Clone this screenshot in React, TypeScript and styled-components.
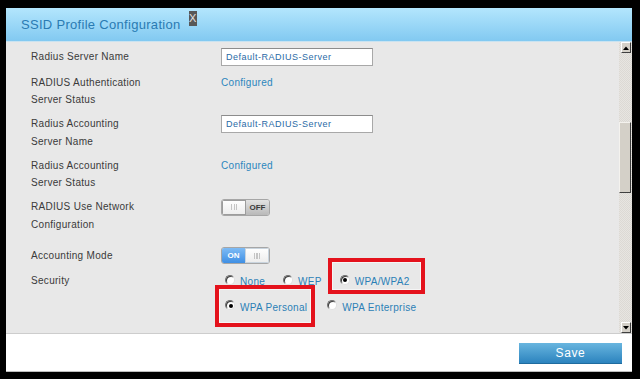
import styled, { createGlobalStyle } from "styled-components";

const GlobalStyle = createGlobalStyle`
  html, body {
    margin: 0;
    padding: 0;
    background: #000000;
    font-family: "Liberation Sans", Arial, sans-serif;
  }
`;

const Page = styled.div`
  width: 640px;
  height: 379px;
  box-sizing: border-box;
  padding: 8px 8px 7px 6px;
`;

const Dialog = styled.div`
  width: 626px;
  height: 364px;
  display: flex;
  flex-direction: column;
  background: #ffffff;
  overflow: hidden;
`;

const TitleBar = styled.div`
  height: 34px;
  box-sizing: border-box;
  padding-left: 15px;
  display: flex;
  align-items: center;
  background: linear-gradient(#b3e6fd, #82c9f1);
  border-bottom: 1px solid #c9e3f1;
`;

const Title = styled.div`
  font-size: 13px;
  letter-spacing: 0.3px;
  color: #2a7bb3;
`;

const CloseBox = styled.div`
  align-self: flex-start;
  margin: 3px 0 0 8px;
  width: 8px;
  height: 15px;
  background: #585858;
  color: #e2e2e2;
  font-size: 11px;
  line-height: 15px;
  text-align: center;
`;

const Body = styled.div`
  flex: 1;
  display: flex;
  background: #e8e8e8;
  overflow: hidden;
`;

const Content = styled.div`
  flex: 1;
  padding: 6px 0 0 25px;
  display: flex;
  flex-direction: column;
  gap: 6.5px;
`;

const Row = styled.div<{ $extra?: number }>`
  display: grid;
  grid-template-columns: 190px 1fr;
  align-items: start;
  min-height: 19px;
  margin-top: ${(p) => p.$extra ?? 0}px;
`;

const Label = styled.div`
  font-size: 10px;
  line-height: 17.5px;
  letter-spacing: 0.3px;
  color: #3a3a3a;
`;

const Value = styled.div`
  min-height: 18px;
  display: flex;
  align-items: center;
`;

const TextField = styled.input`
  width: 152px;
  height: 18px;
  box-sizing: border-box;
  margin: 0;
  padding: 0 0 0 4px;
  border: 1px solid #a8a8a8;
  border-top-color: #8c8c8c;
  background: #ffffff;
  font-family: "Liberation Sans", Arial, sans-serif;
  font-size: 9px;
  letter-spacing: 0.5px;
  color: #2a6aa6;
  outline: none;
`;

const Status = styled.span`
  font-size: 10px;
  letter-spacing: 0.3px;
  color: #2b86bd;
`;

const Switch = styled.div`
  width: 49px;
  height: 17px;
  box-sizing: border-box;
  display: flex;
  border: 1px solid #a6a6a6;
  border-radius: 3px;
  overflow: hidden;
`;

const Knob = styled.div<{ $on?: boolean }>`
  width: 24px;
  display: flex;
  align-items: center;
  justify-content: center;
  background: linear-gradient(#ffffff, #ececec);
  box-shadow: inset 0 0 0 1px ${(p) => (p.$on ? "#c9d4de" : "#9c9c9c")};
`;

const Grip = styled.span`
  width: 6px;
  height: 6px;
  background: repeating-linear-gradient(90deg, #c4c4c4 0 1px, transparent 1px 2.5px);
`;

const SwitchText = styled.div<{ $on?: boolean }>`
  flex: 1;
  display: flex;
  align-items: center;
  justify-content: center;
  font-size: 8px;
  font-weight: 700;
  color: ${(p) => (p.$on ? "#ffffff" : "#3a3a3a")};
  background: ${(p) =>
    p.$on ? "linear-gradient(#7ebbf5, #3f8fe4)" : "linear-gradient(#e2e2e2, #b9b9b9)"};
`;

const Toggle = ({ on }: { on: boolean }) =>
  on ? (
    <Switch>
      <SwitchText $on>ON</SwitchText>
      <Knob $on>
        <Grip />
      </Knob>
    </Switch>
  ) : (
    <Switch>
      <Knob>
        <Grip />
      </Knob>
      <SwitchText>OFF</SwitchText>
    </Switch>
  );

const RadioGroup = styled.div<{ $gap: number }>`
  display: flex;
  align-items: center;
  gap: ${(p) => p.$gap}px;
  padding-left: 4px;
`;

const Option = styled.label`
  position: relative;
  display: flex;
  align-items: center;
  gap: 5px;
  height: 19px;
  font-size: 10px;
  letter-spacing: 0.3px;
  color: #2b7fb6;
`;

const RadioDot = styled.span<{ $checked?: boolean }>`
  position: relative;
  width: 10px;
  height: 10px;
  box-sizing: border-box;
  margin-top: -4px;
  border-radius: 50%;
  border: 1px solid;
  border-color: #6e6e6e #e0e0e0 #e0e0e0 #6e6e6e;
  background: #ffffff;
  box-shadow: inset 1px 1px 0 #3c3c3c;

  &::after {
    content: "";
    display: ${(p) => (p.$checked ? "block" : "none")};
    position: absolute;
    left: 2.5px;
    top: 2.5px;
    width: 4px;
    height: 4px;
    border-radius: 50%;
    background: #000000;
  }
`;

const Highlight = styled.span<{ $t: number; $r: number; $b: number; $l: number }>`
  position: absolute;
  top: ${(p) => p.$t}px;
  right: ${(p) => p.$r}px;
  bottom: ${(p) => p.$b}px;
  left: ${(p) => p.$l}px;
  border: 4px solid #e4121c;
  box-shadow: inset 0 0 0 1px rgba(255, 255, 255, 0.55);
  pointer-events: none;
`;

const Scrollbar = styled.div`
  width: 13px;
  display: flex;
  flex-direction: column;
  background-color: #e7e5e1;
  background-image: repeating-conic-gradient(#dcd9d4 0 25%, transparent 0 50%);
  background-size: 2px 2px;
`;

const ScrollButton = styled.div`
  width: 10px;
  height: 11px;
  box-sizing: border-box;
  margin-left: auto;
  margin-right: 1px;
  display: flex;
  align-items: center;
  justify-content: center;
  background: #d4d0c8;
  border: 1px solid;
  border-color: #ffffff #404040 #404040 #ffffff;
`;

const Track = styled.div`
  flex: 1;
  display: flex;
  flex-direction: column;
`;

const Thumb = styled.div`
  margin-top: 69px;
  width: 12px;
  height: 71px;
  box-sizing: border-box;
  background: #d4d0c8;
  border: 1px solid;
  border-color: #f4f2ee #404040 #404040 #f4f2ee;
`;

const Footer = styled.div`
  height: 39px;
  box-sizing: border-box;
  border-top: 1px solid #cdcdcd;
  border-bottom: 1px solid #bdbdbd;
  display: flex;
  align-items: center;
  justify-content: flex-end;
  padding-right: 10px;
  background: #ffffff;
`;

const SaveButton = styled.button`
  width: 103px;
  height: 21px;
  margin-top: 1px;
  border: none;
  border-bottom: 1px solid #1f6b9e;
  background: linear-gradient(#68b5df, #2c83be);
  color: #ffffff;
  font-family: "Liberation Sans", Arial, sans-serif;
  font-size: 12px;
  letter-spacing: 0.6px;
  cursor: pointer;
`;

const Arrow = ({ up }: { up?: boolean }) => (
  <svg width="6" height="4" viewBox="0 0 6 4">
    <path d={up ? "M0 4 L3 0.5 L6 4 Z" : "M0 0 L3 3.5 L6 0 Z"} fill="#000" />
  </svg>
);

export default function App() {
  return (
    <Page>
      <GlobalStyle />
      <Dialog>
        <TitleBar>
          <Title>SSID Profile Configuration</Title>
          <CloseBox>X</CloseBox>
        </TitleBar>
        <Body>
          <Content>
            <Row>
              <Label>Radius Server Name</Label>
              <Value>
                <TextField readOnly value="Default-RADIUS-Server" />
              </Value>
            </Row>
            <Row>
              <Label>
                RADIUS Authentication
                <br />
                Server Status
              </Label>
              <Value>
                <Status>Configured</Status>
              </Value>
            </Row>
            <Row>
              <Label>
                Radius Accounting
                <br />
                Server Name
              </Label>
              <Value>
                <TextField readOnly value="Default-RADIUS-Server" />
              </Value>
            </Row>
            <Row>
              <Label>
                Radius Accounting
                <br />
                Server Status
              </Label>
              <Value>
                <Status>Configured</Status>
              </Value>
            </Row>
            <Row>
              <Label>
                RADIUS Use Network
                <br />
                Configuration
              </Label>
              <Value>
                <Toggle on={false} />
              </Value>
            </Row>
            <Row $extra={7}>
              <Label>Accounting Mode</Label>
              <Value>
                <Toggle on />
              </Value>
            </Row>
            <Row>
              <Label>Security</Label>
              <Value>
                <RadioGroup $gap={18}>
                  <Option>
                    <RadioDot />
                    None
                  </Option>
                  <Option>
                    <RadioDot />
                    WEP
                  </Option>
                  <Option>
                    <RadioDot $checked />
                    WPA/WPA2
                    <Highlight $t={-14} $r={-15} $b={-3} $l={-12} />
                  </Option>
                </RadioGroup>
              </Value>
            </Row>
            <Row>
              <Label />
              <Value>
                <RadioGroup $gap={20}>
                  <Option>
                    <RadioDot $checked />
                    WPA Personal
                    <Highlight $t={-13} $r={-8} $b={-10} $l={-10} />
                  </Option>
                  <Option>
                    <RadioDot />
                    WPA Enterprise
                  </Option>
                </RadioGroup>
              </Value>
            </Row>
          </Content>
          <Scrollbar>
            <ScrollButton>
              <Arrow up />
            </ScrollButton>
            <Track>
              <Thumb />
            </Track>
            <ScrollButton>
              <Arrow />
            </ScrollButton>
          </Scrollbar>
        </Body>
        <Footer>
          <SaveButton>Save</SaveButton>
        </Footer>
      </Dialog>
    </Page>
  );
}
